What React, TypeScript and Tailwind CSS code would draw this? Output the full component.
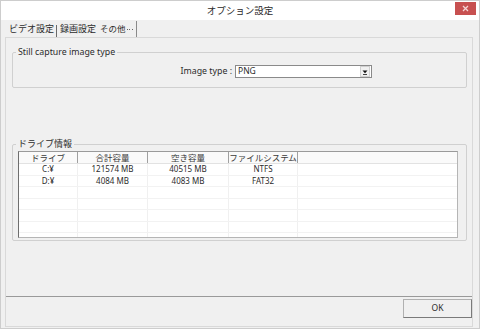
import React from "react";

const FONT = "font-['Noto_Sans','Noto_Sans_CJK_JP',sans-serif]";

const cols = [59, 70, 81, 69];
const headers = ["ドライブ", "合計容量", "空き容量", "ファイルシステム"];
const rows = [
  ["C:¥", "121574 MB", "40515 MB", "NTFS"],
  ["D:¥", "4084 MB", "4083 MB", "FAT32"],
  ["", "", "", ""],
  ["", "", "", ""],
  ["", "", "", ""],
  ["", "", "", ""],
  ["", "", "", ""],
];

export default function App() {
  return (
    <div
      className={`${FONT} w-[480px] h-[329px] bg-[#f0f0f0] border border-[#cdcdcd] flex flex-col text-[#2b2b2b] overflow-hidden`}
    >
      {/* title bar */}
      <div className="h-[19px] bg-white flex items-center justify-center relative shrink-0">
        <span className="text-[9.5px] leading-none">オプション設定</span>
        <div className="absolute right-[3px] top-[1px] w-[21px] h-[13px] bg-[#c75050] flex items-center justify-center">
          <svg width="7" height="7" viewBox="0 0 7 7">
            <path d="M1 1L6 6M6 1L1 6" stroke="#f4d4d4" strokeWidth="1.3" />
          </svg>
        </div>
      </div>

      {/* tabs */}
      <div className="h-[17px] flex items-end pl-[8px] shrink-0 text-[9px] leading-none">
        <div className="pr-[2px] pb-[4px] border-r border-[#6a6a6a] h-[12px] flex items-end">ビデオ設定</div>
        <div className="pl-[3px] pr-[2px] pb-[4px] h-[12px] flex items-end">録画設定</div>
        <div className="pl-[2px] pr-[3px] pb-[4px] border-r border-[#8a8a8a] h-[16px] flex items-end text-[8.5px]">
          その他<span className="ml-[1px] mb-[3px] flex gap-[1.5px]">
            <span className="w-[1px] h-[1px] bg-[#666]" />
            <span className="w-[1px] h-[1px] bg-[#666]" />
            <span className="w-[1px] h-[1px] bg-[#666]" />
          </span>
        </div>
      </div>

      {/* tab frame */}
      <div className="ml-[4px] w-[468px] h-[290px] border border-[#d9d9d9] flex flex-col shrink-0">
        {/* group 1 */}
        <fieldset className="mt-[9px] ml-[6px] mr-[5px] h-[41px] border border-[#d0d0d0] rounded-[2px] px-0">
          <legend className="ml-[3px] px-[2px] text-[8.8px] leading-[10px]">Still capture image type</legend>
          <div className="flex items-center mt-[8px]">
            <div className="ml-[159px] w-[60px] text-right text-[8.8px] leading-none">Image type :</div>
            <div className="ml-[3px] w-[137px] h-[13px] bg-white border border-[#8a8a8a] flex items-center">
              <span className="flex-1 pl-[2px] text-[8.5px] leading-none">PNG</span>
              <div className="w-[10px] h-[11px] mr-[1px] bg-[#f0f0f0] border border-[#d0d0d0] flex items-center justify-center">
                <svg width="6" height="6" viewBox="0 0 6 6">
                  <path d="M0.5 1.5H5.5L3 4.2Z" fill="#111" />
                  <path d="M1 5.5H5" stroke="#111" strokeWidth="0.8" />
                </svg>
              </div>
            </div>
          </div>
        </fieldset>

        {/* group 2 */}
        <fieldset className="mt-[51px] ml-[6px] mr-[5px] h-[102px] border border-[#d0d0d0] rounded-[2px] px-0">
          <legend className="ml-[3px] px-[2px] text-[9px] leading-[10px]">ドライブ情報</legend>
          <div className="mt-[2px] ml-[5px] mr-[8px] h-[87px] bg-white border border-[#b5b5b5] border-l-[#6e6e6e] border-t-[#9a9a9a] flex flex-col overflow-hidden">
            <div className="flex h-[12px] bg-[#fafafa] border-b border-[#e2e2e2] shrink-0">
              {headers.map((h, i) => (
                <div
                  key={i}
                  style={{ width: cols[i] }}
                  className="border-r border-[#a0a0a0] text-[8.5px] leading-[11px] text-center text-[#3a3a3a] shrink-0"
                >
                  {h}
                </div>
              ))}
              <div className="flex-1" />
            </div>
            {rows.map((r, ri) => (
              <div key={ri} className="flex h-[11.5px] border-b border-[#f2f2f2] shrink-0">
                {r.map((c, ci) => (
                  <div
                    key={ci}
                    style={{ width: cols[ci] }}
                    className="border-r border-[#f0f0f0] text-[8px] leading-[10px] text-center shrink-0"
                  >
                    {c}
                  </div>
                ))}
                <div className="flex-1" />
              </div>
            ))}
          </div>
        </fieldset>

        <div className="flex-1" />

        {/* footer */}
        <div className="h-[30px] border-t border-[#9a9a9a] flex justify-end items-start shrink-0">
          <div className="mt-[2px] mr-[0px] w-[69px] h-[19px] bg-[#f0f0f0] border border-[#b0b0b0] border-r-[#7a7a7a] border-b-[#7a7a7a] flex items-center justify-center text-[8.5px] leading-none">
            OK
          </div>
        </div>
      </div>
    </div>
  );
}
